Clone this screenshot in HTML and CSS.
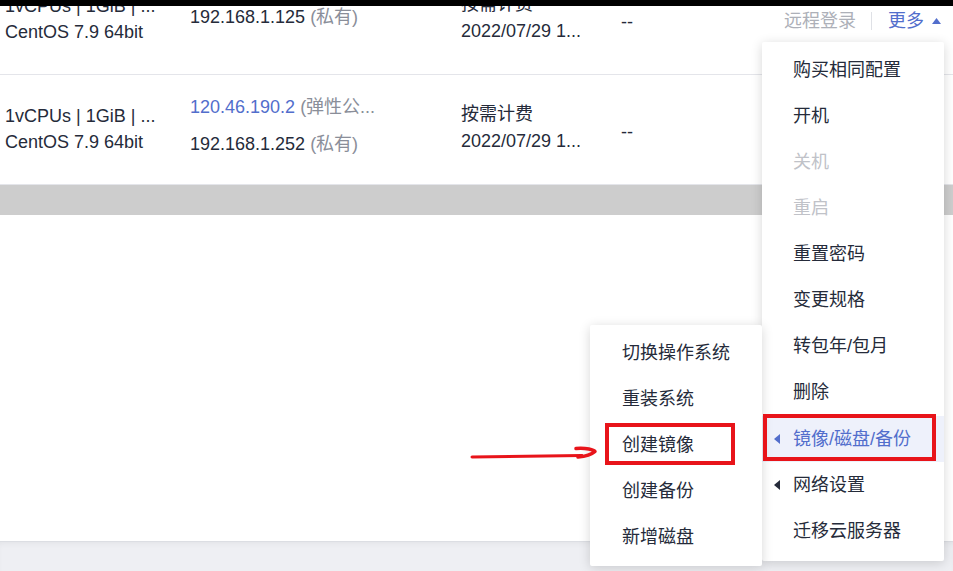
FILE: index.html
```html
<!DOCTYPE html>
<html lang="zh-CN">
<head>
<meta charset="utf-8">
<title>云服务器列表</title>
<link rel="stylesheet" href="styles.css">
</head>
<body>
<div class="topbar"></div>
<div class="viewport">
  <div class="table">
    <div class="row row-first">
      <div class="cell c-spec"><div>1vCPUs | 1GiB | ...</div><div>CentOS 7.9 64bit</div></div>
      <div class="cell c-ip c-ip-single"><div>192.168.1.125 <span class="muted">(私有)</span></div></div>
      <div class="cell c-bill"><div>按需计费</div><div>2022/07/29 1...</div></div>
      <div class="cell c-tag">--</div>
      <div class="cell c-act">
        <span class="disabled">远程登录</span>
        <span class="sep"></span>
        <span class="link">更多</span>
        <svg class="caret-up" width="9" height="6" viewBox="0 0 9 6"><path d="M0 6 L4.5 0 L9 6 Z" fill="#526ecc"/></svg>
      </div>
    </div>
    <div class="row">
      <div class="cell c-spec"><div>1vCPUs | 1GiB | ...</div><div>CentOS 7.9 64bit</div></div>
      <div class="cell c-ip c-ip-double"><div><span class="link">120.46.190.2</span> <span class="muted">(弹性公...</span></div><div>192.168.1.252 <span class="muted">(私有)</span></div></div>
      <div class="cell c-bill"><div>按需计费</div><div>2022/07/29 1...</div></div>
      <div class="cell c-tag">--</div>
      <div class="cell c-act"></div>
    </div>
  </div>
  <div class="hscroll"></div>
  <div class="blank"></div>
  <div class="footer"></div>
</div>

<div class="menu menu-main">
  <div class="item">购买相同配置</div>
  <div class="item">开机</div>
  <div class="item item-disabled">关机</div>
  <div class="item item-disabled">重启</div>
  <div class="item">重置密码</div>
  <div class="item">变更规格</div>
  <div class="item">转包年/包月</div>
  <div class="item">删除</div>
  <div class="item item-active"><span class="tri"></span>镜像/磁盘/备份</div>
  <div class="item"><span class="tri"></span>网络设置</div>
  <div class="item">迁移云服务器</div>
</div>

<div class="menu menu-sub">
  <div class="item">切换操作系统</div>
  <div class="item">重装系统</div>
  <div class="item">创建镜像</div>
  <div class="item">创建备份</div>
  <div class="item">新增磁盘</div>
</div>

<div class="mark mark-main"></div>
<div class="mark mark-sub"></div>
<svg class="arrow" width="140" height="24" viewBox="0 0 140 24">
  <path d="M2 15 L112 13.5" stroke="#e8141a" stroke-width="3" fill="none" stroke-linecap="round"/>
  <path d="M106 6.5 C116 5.5 124 8 125 9.5 C121 13 114 14.5 108 15" stroke="#e8141a" stroke-width="3.5" fill="none" stroke-linecap="round" stroke-linejoin="round"/>
</svg>
</body>
</html>
```
FILE: styles.css
```css
* { box-sizing: border-box; }
html, body {
  margin: 0;
  padding: 0;
  width: 953px;
  height: 571px;
  overflow: hidden;
  background: #ffffff;
  font-family: "Liberation Sans", "Noto Sans CJK SC", Arial, sans-serif;
  font-size: 18px;
  color: #252b3a;
}
.topbar {
  height: 6px;
  background: #000000;
  position: relative;
  z-index: 2;
}
.viewport {
  height: 565px;
  display: flex;
  flex-direction: column;
  overflow: hidden;
}
.table {
  margin-top: -41px;
}
.row {
  height: 110px;
  border-bottom: 1px solid #e4e5ea;
  display: grid;
  grid-template-columns: 185px 271px 160px 163px 1fr;
  padding-left: 5px;
  line-height: 26px;
  white-space: nowrap;
}
.cell {
  display: flex;
  flex-direction: column;
}
.c-spec { padding-top: 28px; }
.c-ip-single { padding-top: 39px; }
.c-ip-double { padding-top: 19px; gap: 11px; }
.c-bill { padding-top: 26px; gap: 1px; }
.c-tag { padding-top: 44px; }
.c-act {
  padding-top: 43px;
  flex-direction: row;
  align-items: flex-start;
}
.muted { color: #8a8e99; }
.link { color: #526ecc; }
.disabled { color: #adb0b8; }
.sep {
  width: 1px;
  height: 18px;
  background: #dfe1e6;
  margin: 4px 16px 0 15px;
}
.caret-up { margin: 10px 0 0 8px; }
.hscroll {
  height: 30px;
  background: #cdcdcd;
}
.blank {
  flex: 1;
}
.footer {
  height: 30px;
  background: #eeeff3;
  border-top: 1px solid #dcdee3;
  box-shadow: inset 0 4px 6px -3px rgba(0,0,0,0.06);
}
.menu {
  position: absolute;
  background: #ffffff;
  box-shadow: 0 2px 12px rgba(0, 0, 0, 0.16);
  border-radius: 2px;
  white-space: nowrap;
  z-index: 3;
}
.menu .item {
  position: relative;
  height: 46px;
  line-height: 46px;
}
.menu-main {
  left: 762px;
  top: 42px;
  width: 182px;
  padding: 5px 0 7px;
}
.menu-main .item { padding-left: 31px; }
.menu-main .item:nth-child(n+6) { height: 46.2px; line-height: 46.2px; }
.menu-sub {
  left: 590px;
  top: 325px;
  width: 172px;
  padding: 5px 0 6px;
}
.menu-sub .item { padding-left: 32px; }
.item-disabled { color: #c0c2c8; }
.item-active {
  background: #eef1fb;
  color: #526ecc;
}
.tri {
  position: absolute;
  left: 12px;
  top: 18px;
  width: 0;
  height: 0;
  border-top: 5px solid transparent;
  border-bottom: 5px solid transparent;
  border-right: 6px solid #252b3a;
}
.item-active .tri { border-right-color: #526ecc; }
.mark {
  position: absolute;
  border: 4px solid #e8141a;
  z-index: 4;
}
.mark-main {
  left: 763px;
  top: 414px;
  width: 173px;
  height: 47px;
}
.mark-sub {
  left: 605px;
  top: 423px;
  width: 130px;
  height: 42px;
}
.arrow {
  position: absolute;
  left: 470px;
  top: 442px;
  z-index: 4;
}
```
